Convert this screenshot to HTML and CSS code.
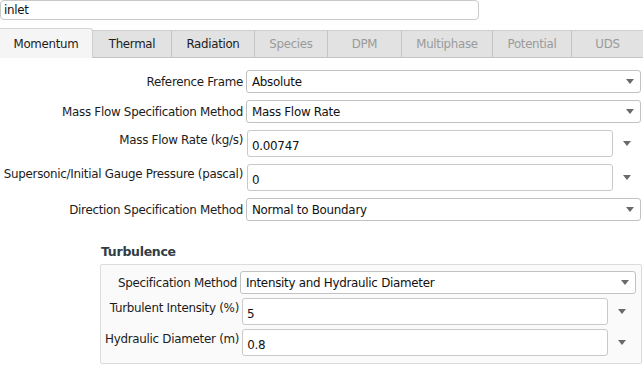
FILE: index.html
```html
<!DOCTYPE html>
<html lang="en">
<head>
    <meta charset="UTF-8">
    <title>Boundary Conditions - inlet</title>
    <link rel="stylesheet" href="styles.css">
</head>
<body>
    <div class="zone-name">inlet</div>

    <div class="tabs">
        <div class="tab tab-active">Momentum</div>
        <div class="tab">Thermal</div>
        <div class="tab">Radiation</div>
        <div class="tab tab-disabled">Species</div>
        <div class="tab tab-disabled">DPM</div>
        <div class="tab tab-disabled">Multiphase</div>
        <div class="tab tab-disabled">Potential</div>
        <div class="tab tab-disabled">UDS</div>
    </div>

    <div class="form">
        <div class="row">
            <span class="label">Reference Frame</span>
            <div class="dropdown">
                <span>Absolute</span>
                <svg class="arrow" width="8" height="5" viewBox="0 0 8 5"><polygon points="0,0 8,0 4,5"/></svg>
            </div>
        </div>
        <div class="row">
            <span class="label">Mass Flow Specification Method</span>
            <div class="dropdown">
                <span>Mass Flow Rate</span>
                <svg class="arrow" width="8" height="5" viewBox="0 0 8 5"><polygon points="0,0 8,0 4,5"/></svg>
            </div>
        </div>
        <div class="row row-input">
            <span class="label">Mass Flow Rate (kg/s)</span>
            <div class="textbox">0.00747</div>
            <div class="option-btn">
                <svg class="arrow" width="8" height="5" viewBox="0 0 8 5"><polygon points="0,0 8,0 4,5"/></svg>
            </div>
        </div>
        <div class="row row-input">
            <span class="label">Supersonic/Initial Gauge Pressure (pascal)</span>
            <div class="textbox">0</div>
            <div class="option-btn">
                <svg class="arrow" width="8" height="5" viewBox="0 0 8 5"><polygon points="0,0 8,0 4,5"/></svg>
            </div>
        </div>
        <div class="row">
            <span class="label">Direction Specification Method</span>
            <div class="dropdown">
                <span>Normal to Boundary</span>
                <svg class="arrow" width="8" height="5" viewBox="0 0 8 5"><polygon points="0,0 8,0 4,5"/></svg>
            </div>
        </div>
    </div>

    <div class="section">
        <div class="section-title">Turbulence</div>
        <div class="group">
            <div class="row">
                <span class="label">Specification Method</span>
                <div class="dropdown">
                    <span>Intensity and Hydraulic Diameter</span>
                    <svg class="arrow" width="8" height="5" viewBox="0 0 8 5"><polygon points="0,0 8,0 4,5"/></svg>
                </div>
            </div>
            <div class="row row-input">
                <span class="label">Turbulent Intensity (%)</span>
                <div class="textbox">5</div>
                <div class="option-btn">
                    <svg class="arrow" width="8" height="5" viewBox="0 0 8 5"><polygon points="0,0 8,0 4,5"/></svg>
                </div>
            </div>
            <div class="row row-input">
                <span class="label">Hydraulic Diameter (m)</span>
                <div class="textbox">0.8</div>
                <div class="option-btn">
                    <svg class="arrow" width="8" height="5" viewBox="0 0 8 5"><polygon points="0,0 8,0 4,5"/></svg>
                </div>
            </div>
        </div>
    </div>
</body>
</html>
```

FILE: styles.css
```css
body {
    margin: 0;
    width: 643px;
    height: 366px;
    overflow: hidden;
    background: #fff;
    color: #1c1c1c;
    font-family: "DejaVu Sans", Verdana, sans-serif;
    font-size: 11.9px;
    letter-spacing: -0.28px;
}

.zone-name {
    box-sizing: border-box;
    width: 479px;
    height: 20px;
    padding: 2px 0 0 3px;
    border: 1px solid #c9c9c9;
    border-radius: 4px;
    line-height: 15px;
    color: #111;
}

/* tab strip */
.tabs {
    display: grid;
    grid-template-columns: 93px 79px 83px 73px 74px 91px 79px 1fr;
    height: 27px;
    margin-top: 10px;
    border-bottom: 1px solid #c4c4c4;
    font-size: 11.8px;
    letter-spacing: -0.3px;
}

.tab {
    display: flex;
    align-items: center;
    justify-content: center;
    background: #e2e2e2;
    border-top: 1px solid #cfcfcf;
    border-right: 1px solid #c4c4c4;
    color: #1c1c1c;
}

.tab-active {
    background: #f5f5f5;
    margin-top: -2px;
    margin-bottom: -1px;
    border-top: 1px solid #d6d6d6;
    border-right: 1px solid #cfcfcf;
    border-radius: 0 3px 0 0;
}

.tab-disabled {
    color: #9a9a9a;
}

.tab:last-child {
    border-right: none;
}

/* form rows */
.form {
    display: flex;
    flex-direction: column;
    gap: 7px;
    margin-top: 12px;
}

.row {
    display: flex;
    align-items: center;
    height: 23px;
}

.row-input {
    height: 27px;
    align-items: flex-start;
}

.label {
    flex: 0 0 245px;
    box-sizing: border-box;
    padding-right: 2px;
    text-align: right;
    white-space: nowrap;
}

.row-input .label {
    line-height: 20px;
}

.dropdown {
    box-sizing: border-box;
    flex: 0 0 395px;
    height: 23px;
    margin-left: 1px;
    display: flex;
    align-items: center;
    justify-content: space-between;
    padding: 0 6px 0 5px;
    border: 1px solid #c2c2c2;
    border-radius: 3px;
    background: #fff;
    color: #111;
}

.textbox {
    box-sizing: border-box;
    flex: 0 0 366px;
    height: 27px;
    margin-left: 2px;
    padding: 8px 0 0 4px;
    line-height: 14px;
    border: 1px solid #c9c9c9;
    border-radius: 3px;
    background: #fff;
    color: #111;
}

.option-btn {
    flex: 0 0 28px;
    height: 27px;
    display: flex;
    align-items: center;
    justify-content: center;
}

.arrow {
    display: block;
    fill: #6a6a6a;
}

/* turbulence section */
.section {
    margin: 21px 1px 0 100px;
}

.section-title {
    font-weight: bold;
    font-size: 12.5px;
    color: #323c46;
    padding-left: 1px;
    height: 20px;
    line-height: 20px;
}

.group {
    display: flex;
    flex-direction: column;
    gap: 4px;
    margin-top: 2px;
    padding: 6px 7px 7px 4px;
    border: 1px solid #dcdcdc;
    border-radius: 2px;
    background: #fafafa;
}

.group .label {
    flex: 0 0 136px;
    padding-right: 2px;
}

.group .row:first-child .label {
    flex-basis: 134px;
}

.group .dropdown {
    flex: 0 0 396px;
    margin-left: 1px;
}

.group .textbox {
    flex: 0 0 366px;
    margin-left: 1px;
}

.group .option-btn {
    flex: 0 0 28px;
}
```
